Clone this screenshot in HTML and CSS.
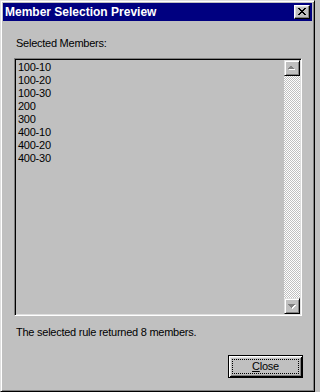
FILE: index.html
```html
<!DOCTYPE html>
<html>
<head>
<meta charset="utf-8">
<link rel="stylesheet" href="styles.css">
</head>
<body>
<div class="window">
  <div class="titlebar">
    <span class="title">Member Selection Preview</span>
    <button class="tbtn" aria-label="Close">
      <svg width="8" height="7" viewBox="0 0 8 7" shape-rendering="crispEdges"><path fill="#000" d="M0 0h2v1H0zM6 0h2v1H6zM1 1h2v1H1zM5 1h2v1H5zM2 2h4v1H2zM3 3h2v1H3zM2 4h4v1H2zM1 5h2v1H1zM5 5h2v1H5zM0 6h2v1H0zM6 6h2v1H6z"/></svg>
    </button>
  </div>
  <div class="content">
    <div class="label">Selected Members:</div>
    <div class="listbox">
      <div class="items">
        <div class="item">100-10</div>
        <div class="item">100-20</div>
        <div class="item">100-30</div>
        <div class="item">200</div>
        <div class="item">300</div>
        <div class="item">400-10</div>
        <div class="item">400-20</div>
        <div class="item">400-30</div>
      </div>
      <div class="scrollbar">
        <div class="sbtn">
          <svg width="8" height="5" viewBox="0 0 8 5" shape-rendering="crispEdges"><path fill="#fff" d="M4 1h1v1h1v1h1v1H1V3h1V2h1V1z"/><path fill="#808080" d="M3 0h1v1h1v1h1v1H0V2h1V1h1V0z"/></svg>
        </div>
        <div class="track"></div>
        <div class="sbtn">
          <svg width="8" height="5" viewBox="0 0 8 5" shape-rendering="crispEdges"><path fill="#fff" d="M1 1h7v1H7v1H6v1H5v1H4V4H3V3H2V2H1z"/><path fill="#808080" d="M0 0h7v1H6v1H5v1H4v1H3V3H2V2H1V1H0z"/></svg>
        </div>
      </div>
    </div>
    <div class="status">The selected rule returned 8 members.</div>
    <div class="actions">
      <button class="btn"><span class="focus"><u>C</u>lose</span></button>
    </div>
  </div>
</div>
</body>
</html>
```
FILE: styles.css
```css
html, body {
  margin: 0;
  padding: 0;
  background: #c0c0c0;
}
body {
  font-family: "Liberation Sans", Arial, sans-serif;
  font-size: 11px;
  letter-spacing: -0.25px;
  color: #000;
}
.window {
  width: 315px;
  height: 392px;
  box-sizing: border-box;
  background: #c0c0c0;
  border-top: 1px solid #dfdfdf;
  border-left: 1px solid #dfdfdf;
  border-right: 1px solid #000;
  border-bottom: 1px solid #000;
  box-shadow: inset 1px 1px #fff, inset -1px -1px #808080;
  padding: 2px;
  display: flex;
  flex-direction: column;
}
.titlebar {
  height: 18px;
  background: #000080;
  display: flex;
  align-items: center;
  justify-content: space-between;
  padding: 0 2px 0 2px;
}
.title {
  color: #fff;
  font-weight: bold;
  font-size: 12px;
  letter-spacing: 0;
  line-height: 14px;
}
.tbtn {
  width: 16px;
  height: 14px;
  padding: 0;
  margin: 0;
  background: #c0c0c0;
  border-top: 1px solid #fff;
  border-left: 1px solid #fff;
  border-right: 1px solid #000;
  border-bottom: 1px solid #000;
  box-shadow: inset -1px -1px #808080, inset 1px 1px #dfdfdf;
  display: flex;
  align-items: center;
  justify-content: center;
  box-sizing: border-box;
}
.tbtn svg {
  display: block;
  margin: 0 0 1px 0;
}
.content {
  padding: 16px 9px 0 11px;
  display: flex;
  flex-direction: column;
}
.label {
  line-height: 13px;
  padding-left: 2px;
}
.listbox {
  margin-top: 8px;
  margin-right: 1px;
  height: 258px;
  box-sizing: border-box;
  border-top: 1px solid #808080;
  border-left: 1px solid #808080;
  border-right: 1px solid #fff;
  border-bottom: 1px solid #fff;
  box-shadow: inset 1px 1px #000, inset -1px -1px #dfdfdf;
  padding: 1px;
  display: flex;
}
.items {
  flex: 1;
  padding: 1px 0 0 2px;
}
.item {
  line-height: 13px;
  height: 13px;
}
.scrollbar {
  width: 16px;
  display: flex;
  flex-direction: column;
}
.sbtn {
  width: 16px;
  height: 16px;
  box-sizing: border-box;
  background: #c0c0c0;
  border-top: 1px solid #dfdfdf;
  border-left: 1px solid #dfdfdf;
  border-right: 1px solid #000;
  border-bottom: 1px solid #000;
  box-shadow: inset 1px 1px #fff, inset -1px -1px #808080;
  display: flex;
  align-items: center;
  justify-content: center;
}
.track {
  flex: 1;
  background-color: #c0c0c0;
  background-image: conic-gradient(#fff 25%, #c0c0c0 0 50%, #fff 0 75%, #c0c0c0 0);
  background-size: 2px 2px;
}
.status {
  margin-top: 10px;
  line-height: 13px;
  padding-left: 2px;
}
.actions {
  margin-top: 16px;
  display: flex;
  justify-content: flex-end;
}
.btn {
  width: 75px;
  height: 23px;
  box-sizing: border-box;
  margin: 0;
  padding: 3px;
  background: #c0c0c0;
  border: 1px solid #000;
  box-shadow: inset 1px 1px #fff, inset -1px -1px #000, inset 2px 2px #dfdfdf, inset -2px -2px #808080;
  font-family: "Liberation Sans", Arial, sans-serif;
  font-size: 11px;
  letter-spacing: -0.25px;
  color: #000;
  display: flex;
}
.focus {
  flex: 1;
  border: 1px dotted #000;
  display: flex;
  align-items: center;
  justify-content: center;
  line-height: 13px;
}
.focus u {
  text-decoration: underline;
  text-underline-offset: 1px;
}
```
